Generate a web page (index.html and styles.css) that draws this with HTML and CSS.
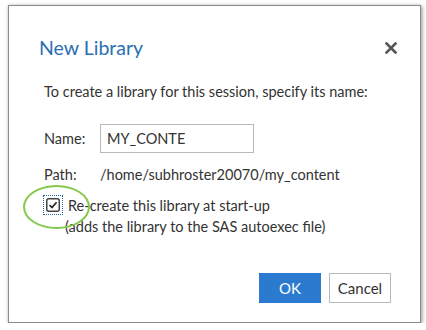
FILE: index.html
```html
<!DOCTYPE html>
<html>
<head>
  <title>New Library</title>
  <link rel="stylesheet" href="styles.css">
</head>
<body>
  <div class="dialog">
    <div class="dialog-header">
      <h1 class="title">New Library</h1>
      <svg class="close" width="12" height="12" viewBox="0 0 12 12">
        <path d="M1.5 1.5 L10.5 10.5 M10.5 1.5 L1.5 10.5" stroke="#555" stroke-width="2.6" stroke-linecap="square"/>
      </svg>
    </div>

    <div class="dialog-body">
      <p class="intro">To create a library for this session, specify its name:</p>

      <div class="field">
        <label for="libname">Name:</label>
        <input type="text" id="libname" value="MY_CONTE">
      </div>

      <div class="field path">
        <span class="label">Path:</span>
        <span>/home/subhroster20070/my_content</span>
      </div>

      <div class="check-row">
        <span class="checkbox">
          <svg width="14" height="14" viewBox="0 0 14 14">
            <rect x="0.75" y="0.75" width="12.5" height="12.5" rx="2" fill="#fff" stroke="#444" stroke-width="1.5"/>
            <path d="M3.6 7.2 L6 9.6 L10.6 4.2" fill="none" stroke="#222" stroke-width="1.7"/>
          </svg>
        </span>
        <div class="check-text">
          <div>Re-create this library at start-up</div>
          <div class="note">(adds the library to the SAS autoexec file)</div>
        </div>
        <span class="highlight"></span>
      </div>
    </div>

    <div class="dialog-footer">
      <button class="btn primary">OK</button>
      <button class="btn">Cancel</button>
    </div>
  </div>
</body>
</html>
```

FILE: styles.css
```css
body {
  margin: 0;
  background-color: #fff;
  font-family: Lato, "Open Sans", sans-serif;
  color: #333;
  padding: 5px 0 0 8px;
}

.dialog {
  width: 411px;
  height: 316px;
  background-color: #fff;
  border: 1px solid #8a8a8a;
  box-shadow: 1px 1px 4px rgba(0, 0, 0, 0.45);
  display: flex;
  flex-direction: column;
}

.dialog-header {
  display: flex;
  justify-content: space-between;
  align-items: center;
  padding: 30px 23px 0 30px;
}

.title {
  margin: 0;
  font-size: 19.5px;
  font-weight: normal;
  color: #2c6fb3;
}

.close {
  display: block;
}

.dialog-body {
  padding: 0 0 0 35px;
  font-size: 14.5px;
}

.intro {
  margin: 24px 0 24px;
}

.field {
  display: flex;
  align-items: center;
}

.field label,
.field .label {
  width: 56px;
}

.field input {
  width: 140px;
  height: 27px;
  padding: 0 6px;
  border: 1px solid #b8b8b8;
  font-family: inherit;
  font-size: 14.5px;
  color: #333;
  box-sizing: content-box;
}

.path {
  margin-top: 13px;
}

.check-row {
  position: relative;
  display: flex;
  margin-top: 12px;
}

.checkbox {
  width: 14px;
  height: 14px;
  padding: 2px;
  margin-top: 1px;
  outline: 1px dotted #2266aa;
}

.checkbox svg {
  display: block;
}

.check-text {
  margin-left: 6px;
  line-height: 21px;
}

.note {
  margin-left: -3px;
}

.highlight {
  position: absolute;
  left: -21px;
  top: -10px;
  width: 63px;
  height: 40px;
  border: 2px solid #82c84a;
  border-radius: 50%;
}

.dialog-footer {
  margin-top: auto;
  display: flex;
  justify-content: flex-end;
  gap: 8px;
  padding: 0 29px 19px 0;
}

.btn {
  width: 62px;
  height: 30px;
  border: 1px solid #b8b8b8;
  background-color: #fff;
  font-family: inherit;
  font-size: 15px;
  color: #333;
  padding: 0;
}

.btn.primary {
  background-color: #2a7bd0;
  border-color: #2a7bd0;
  color: #fff;
}
```
